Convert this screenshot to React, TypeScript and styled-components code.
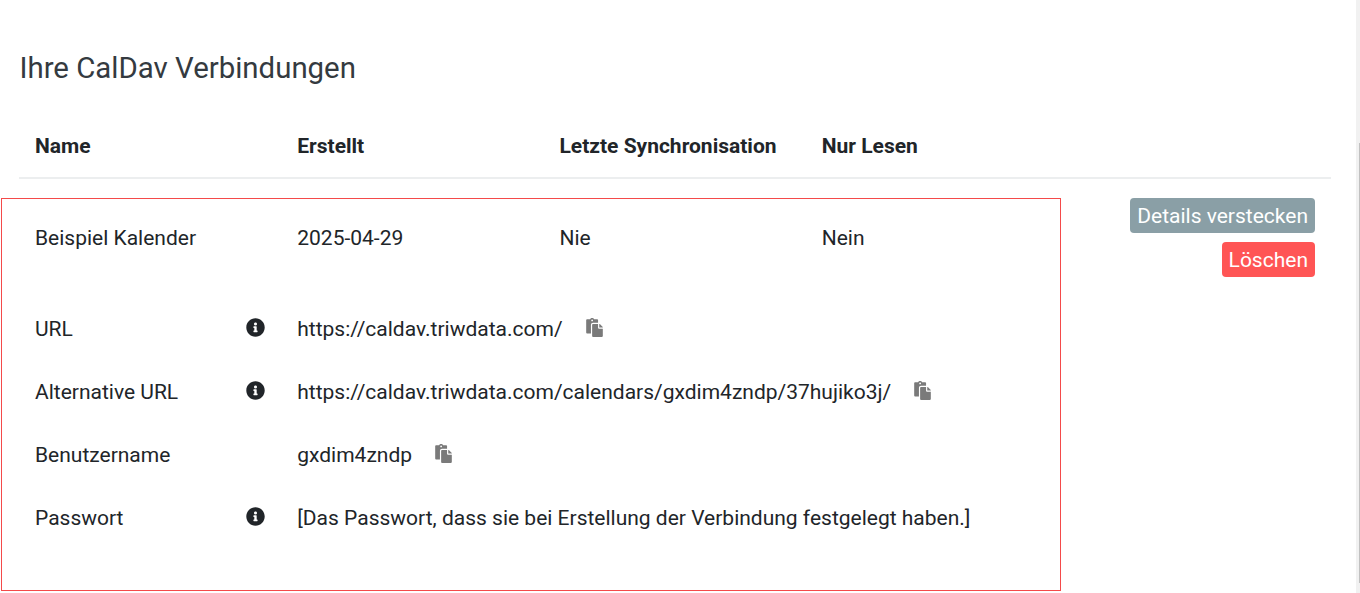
import React from "react";
import styled, { createGlobalStyle } from "styled-components";
import { FaInfoCircle, FaPaste } from "react-icons/fa";

const Global = createGlobalStyle`
  html, body { margin: 0; padding: 0; background: #fff; overflow: hidden; }
  body { font-family: Roboto, "Liberation Sans", sans-serif; color: #212529; }
`;

const Page = styled.div`
  width: 1360px;
  height: 593px;
  display: flex;
  overflow: hidden;
`;

const Content = styled.main`
  width: 1356px;
  padding: 50px 25px 0 1px;
  box-sizing: border-box;
`;

const Scrollbar = styled.div`
  width: 4px;
  height: 593px;
  padding-top: 143px;
  box-sizing: border-box;
  display: flex;
  justify-content: flex-end;
  background: #f1f1f1;
`;

const ScrollThumb = styled.div`
  width: 1px;
  height: 440px;
  background: #c1c1c1;
`;

const Title = styled.h2`
  margin: 0 0 28px 18.5px;
  font-size: 29.4px;
  line-height: 36px;
  font-weight: 400;
  color: #343a40;
`;

const HeaderRow = styled.div`
  margin-left: 18px;
  height: 65px;
  display: grid;
  grid-template-columns: repeat(5, 262.25px);
  align-items: center;
  border-bottom: 2px solid #eceeef;
  box-sizing: border-box;
`;

const HeadCell = styled.div`
  padding-left: 16px;
  font-size: 21px;
  font-weight: 700;
  color: #212529;
`;

const Body = styled.div`
  display: flex;
  margin-top: 19px;
`;

const Panel = styled.section`
  width: 1060px;
  height: 393px;
  box-sizing: border-box;
  border: 1px solid #f44a4a;
  padding: 0 0 0 33px;
`;

const Row = styled.div<{ $height: number }>`
  display: grid;
  grid-template-columns: 262.25px 262.25px 262.25px 1fr;
  align-items: center;
  height: ${(p) => p.$height}px;
  font-size: 21px;
  color: #212529;
`;

const DetailRow = styled.div`
  display: flex;
  align-items: center;
  height: 63px;
  font-size: 21px;
  color: #212529;
`;

const Label = styled.div`
  width: 211px;
  flex: none;
`;

const InfoSlot = styled.div`
  width: 51.25px;
  flex: none;
  display: flex;
  align-items: center;
  svg { display: block; font-size: 19px; color: #212529; margin: 0 0 3px 0; }
`;

const Value = styled.div`
  white-space: nowrap;
`;

const CopyIcon = styled(FaPaste)`
  margin: 0 0 3px 22px;
  font-size: 19px;
  color: #7a7a7a;
  flex: none;
`;

const Rows = styled.div`
  margin-top: 20px;
`;

const Actions = styled.div`
  flex: 1;
  display: flex;
  flex-direction: column;
  align-items: flex-end;
  gap: 9px;
  padding-right: 16px;
`;

const Button = styled.button<{ $bg: string }>`
  height: 35px;
  padding: 1px 7px 0;
  border: 0;
  border-radius: 4px;
  background: ${(p) => p.$bg};
  color: #fff;
  font: 400 21px/34px Roboto, "Liberation Sans", sans-serif;
  white-space: nowrap;
`;

const details = [
  { label: "URL", info: true, value: "https://caldav.triwdata.com/", copy: true },
  { label: "Alternative URL", info: true, value: "https://caldav.triwdata.com/calendars/gxdim4zndp/37hujiko3j/", copy: true },
  { label: "Benutzername", info: false, value: "gxdim4zndp", copy: true },
  { label: "Passwort", info: true, value: "[Das Passwort, dass sie bei Erstellung der Verbindung festgelegt haben.]", copy: false },
];

export default function App() {
  return (
    <Page>
      <Global />
      <Content>
        <Title>Ihre CalDav Verbindungen</Title>
        <HeaderRow>
          <HeadCell>Name</HeadCell>
          <HeadCell>Erstellt</HeadCell>
          <HeadCell>Letzte Synchronisation</HeadCell>
          <HeadCell>Nur Lesen</HeadCell>
        </HeaderRow>
        <Body>
          <Panel>
            <Row $height={78}>
              <div>Beispiel Kalender</div>
              <div>2025-04-29</div>
              <div>Nie</div>
              <div>Nein</div>
            </Row>
            <Rows>
              {details.map((d) => (
                <DetailRow key={d.label}>
                  <Label>{d.label}</Label>
                  <InfoSlot>{d.info && <FaInfoCircle />}</InfoSlot>
                  <Value>{d.value}</Value>
                  {d.copy && <CopyIcon />}
                </DetailRow>
              ))}
            </Rows>
          </Panel>
          <Actions>
            <Button $bg="#8a9fa6">Details verstecken</Button>
            <Button $bg="#ff5555">Löschen</Button>
          </Actions>
        </Body>
      </Content>
      <Scrollbar>
        <ScrollThumb />
      </Scrollbar>
    </Page>
  );
}
